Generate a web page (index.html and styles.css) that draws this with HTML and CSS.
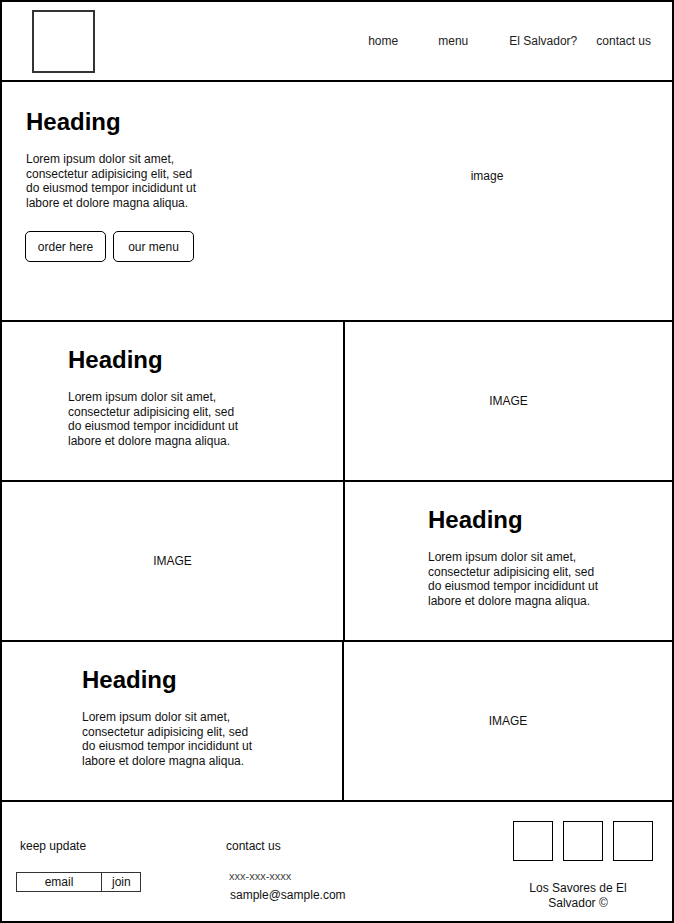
FILE: index.html
```html
<!DOCTYPE html>
<html lang="en">
<head>
    <meta charset="UTF-8">
    <meta name="viewport" content="width=device-width, initial-scale=1.0">
    <title>Los Savores de El Salvador</title>
    <link rel="stylesheet" href="styles.css">
</head>
<body>
    <div class="page">
        <!-- header -->
        <header class="header">
            <div class="logo"></div>
            <nav class="nav">
                <a class="nav-link nav-home">home</a>
                <a class="nav-link nav-menu">menu</a>
                <a class="nav-link nav-es">El Salvador?</a>
                <a class="nav-link nav-contact">contact us</a>
            </nav>
        </header>

        <!-- hero -->
        <section class="hero">
            <div class="hero-text">
                <h1 class="heading">Heading</h1>
                <p class="lorem">Lorem ipsum dolor sit amet, consectetur adipisicing elit, sed do eiusmod tempor incididunt ut labore et dolore magna aliqua.</p>
                <div class="buttons">
                    <a class="btn">order here</a>
                    <a class="btn">our menu</a>
                </div>
            </div>
            <div class="hero-image">image</div>
        </section>

        <!-- rows -->
        <section class="row">
            <div class="cell cell-text row1-text">
                <h2 class="heading">Heading</h2>
                <p class="lorem">Lorem ipsum dolor sit amet, consectetur adipisicing elit, sed do eiusmod tempor incididunt ut labore et dolore magna aliqua.</p>
            </div>
            <div class="cell cell-image">IMAGE</div>
        </section>

        <section class="row">
            <div class="cell cell-image">IMAGE</div>
            <div class="cell cell-text row2-text">
                <h2 class="heading">Heading</h2>
                <p class="lorem">Lorem ipsum dolor sit amet, consectetur adipisicing elit, sed do eiusmod tempor incididunt ut labore et dolore magna aliqua.</p>
            </div>
        </section>

        <section class="row row-3">
            <div class="cell cell-text row3-text">
                <h2 class="heading">Heading</h2>
                <p class="lorem">Lorem ipsum dolor sit amet, consectetur adipisicing elit, sed do eiusmod tempor incididunt ut labore et dolore magna aliqua.</p>
            </div>
            <div class="cell cell-image">IMAGE</div>
        </section>

        <!-- footer -->
        <footer class="footer">
            <div class="foot-col foot-news">
                <div class="foot-label">keep update</div>
                <div class="signup">
                    <span class="signup-email">email</span>
                    <span class="signup-join">join</span>
                </div>
            </div>
            <div class="foot-col foot-contact">
                <div class="foot-label">contact us</div>
                <div class="phone">xxx-xxx-xxxx</div>
                <div class="mail">sample@sample.com</div>
            </div>
            <div class="foot-col foot-social">
                <div class="socials">
                    <div class="social"></div>
                    <div class="social"></div>
                    <div class="social"></div>
                </div>
                <div class="copy">Los Savores de El Salvador ©</div>
            </div>
        </footer>
    </div>
</body>
</html>
```

FILE: styles.css
```css
*{
    padding: 0px;
    margin: 0px;
    box-sizing: border-box;
}
body{
    font-family: "Liberation Sans", Arial, sans-serif;
    font-size: 12px;
    color: #111;
    background: #fff;
}
.page{
    width: 674px;
    height: 923px;
    border: 2px solid #000;
    display: flex;
    flex-direction: column;
}

/* header */
.header{
    height: 80px;
    border-bottom: 2px solid #000;
    display: flex;
    align-items: center;
    padding-left: 30px;
}
.logo{
    width: 63px;
    height: 63px;
    border: 2px solid #333;
    margin-top: 1px;
}
.nav{
    margin-left: auto;
    display: flex;
    align-items: center;
    padding-right: 21px;
    color: #222;
}
.nav-link{
    display: block;
}
.nav-menu{ margin-left: 40px; }
.nav-es{ margin-left: 41px; }
.nav-contact{ margin-left: 19px; }

/* hero */
.hero{
    height: 240px;
    border-bottom: 2px solid #000;
    display: grid;
    grid-template-columns: 300px 1fr;
}
.hero-text{
    padding: 26px 0 0 24px;
}
.hero-image{
    text-align: center;
    padding-top: 87px;
}
.heading{
    font-size: 24px;
    font-weight: bold;
    line-height: 27px;
    color: #000;
}
.lorem{
    width: 176px;
    line-height: 14.5px;
    margin-top: 17px;
}
.buttons{
    display: flex;
    gap: 7px;
    margin-top: 21px;
    margin-left: -1px;
}
.btn{
    width: 81px;
    height: 31px;
    border: 1px solid #000;
    border-radius: 5px;
    display: flex;
    align-items: center;
    justify-content: center;
}

/* content rows */
.row{
    height: 160px;
    border-bottom: 2px solid #000;
    display: grid;
    grid-template-columns: 343px 1fr;
}
.row-3{
    grid-template-columns: 342px 1fr;
}
.cell:first-child{
    border-right: 2px solid #000;
}
.cell-text{
    padding-top: 24px;
}
.cell-image{
    display: flex;
    align-items: center;
    justify-content: center;
}
.row1-text{ padding-left: 66px; }
.row2-text{ padding-left: 83px; }
.row3-text{ padding-left: 80px; }

/* footer */
.footer{
    flex: 1;
    display: flex;
    padding-left: 14px;
    padding-right: 19px;
}
.foot-news{
    width: 210px;
    padding-top: 37px;
}
.foot-news .foot-label{
    padding-left: 4px;
}
.foot-label{
    line-height: 14px;
}
.signup{
    display: flex;
    width: 125px;
    height: 20px;
    margin-top: 19px;
    border: 1px solid #333;
}
.signup-email{
    width: 85px;
    border-right: 1px solid #333;
    text-align: center;
    line-height: 18px;
}
.signup-join{
    flex: 1;
    padding-left: 10px;
    line-height: 18px;
}
.foot-contact{
    padding-top: 37px;
}
.phone{
    font-size: 11px;
    color: #444;
    margin-top: 17px;
    padding-left: 3px;
    line-height: 12px;
}
.mail{
    margin-top: 6px;
    padding-left: 4px;
    line-height: 14px;
}
.foot-social{
    margin-left: auto;
    padding-top: 19px;
    width: 140px;
}
.socials{
    display: flex;
    gap: 10px;
}
.social{
    width: 40px;
    height: 40px;
    border: 1px solid #000;
}
.copy{
    margin-top: 20px;
    text-align: center;
    line-height: 15px;
    padding: 0 10px 0 0;
}
```
